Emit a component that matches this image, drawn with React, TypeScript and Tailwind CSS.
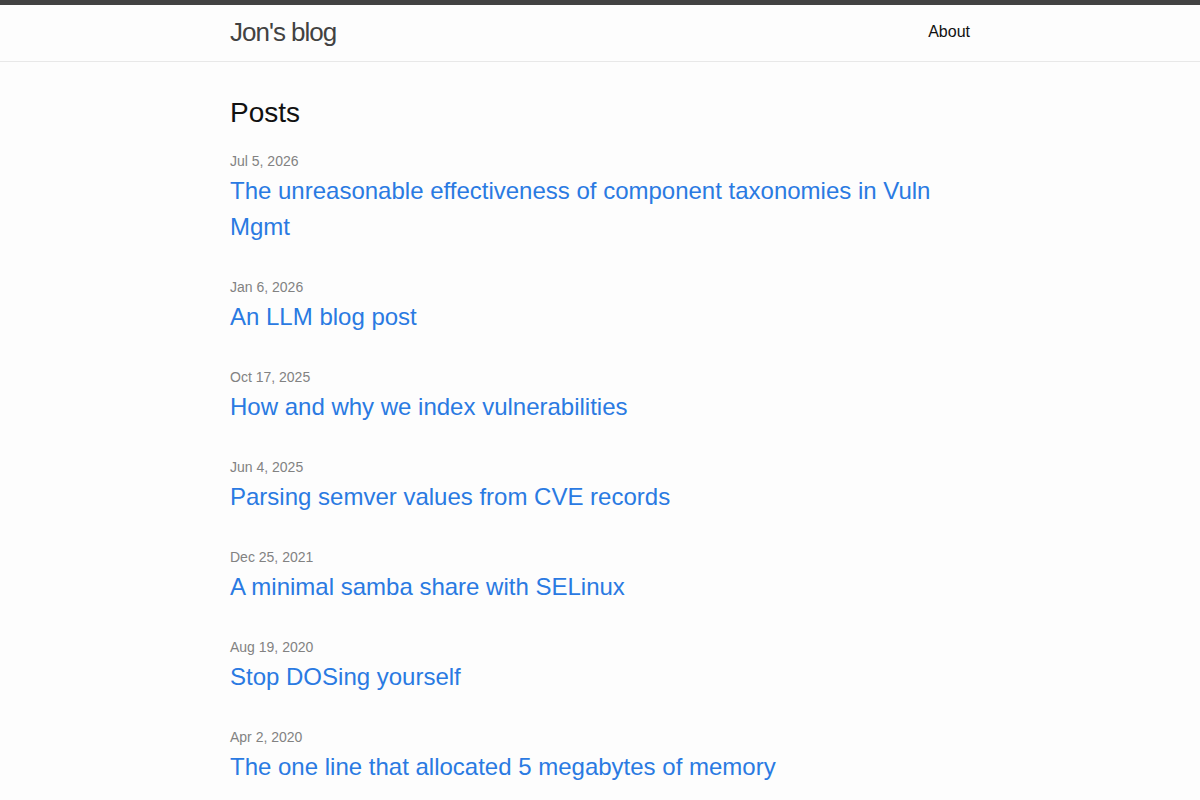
const posts = [
  { date: 'Jul 5, 2026', title: 'The unreasonable effectiveness of component taxonomies in Vuln Mgmt' },
  { date: 'Jan 6, 2026', title: 'An LLM blog post' },
  { date: 'Oct 17, 2025', title: 'How and why we index vulnerabilities' },
  { date: 'Jun 4, 2025', title: 'Parsing semver values from CVE records' },
  { date: 'Dec 25, 2021', title: 'A minimal samba share with SELinux' },
  { date: 'Aug 19, 2020', title: 'Stop DOSing yourself' },
  { date: 'Apr 2, 2020', title: 'The one line that allocated 5 megabytes of memory' },
]

export default function App() {
  return (
    <div className="min-h-screen bg-[#fdfdfd] text-[#111] font-['Liberation_Sans',Arial,sans-serif] text-base leading-6">
      <header className="border-t-[5px] border-t-[#424242] border-b border-b-[#e8e8e8] min-h-[62px]">
        <div className="max-w-[740px] mx-auto flex justify-between items-start">
          <a href="#" className="text-[26px] leading-[54px] font-light tracking-[-1px] text-[#424242]">
            Jon's blog
          </a>
          <nav className="leading-[54px]">
            <a href="#" className="text-[#111]">About</a>
          </nav>
        </div>
      </header>

      <main className="max-w-[740px] mx-auto pt-[30px] pb-[30px]">
        <h2 className="text-[28px] leading-[42px] mb-[15px]">Posts</h2>
        <ul className="flex flex-col gap-[30px]">
          {posts.map((post) => (
            <li key={post.title}>
              <span className="block text-sm leading-6 text-[#828282]">{post.date}</span>
              <h3>
                <a href="#" className="block text-2xl leading-9 text-[#2a7ae2]">
                  {post.title}
                </a>
              </h3>
            </li>
          ))}
        </ul>
      </main>
    </div>
  )
}
